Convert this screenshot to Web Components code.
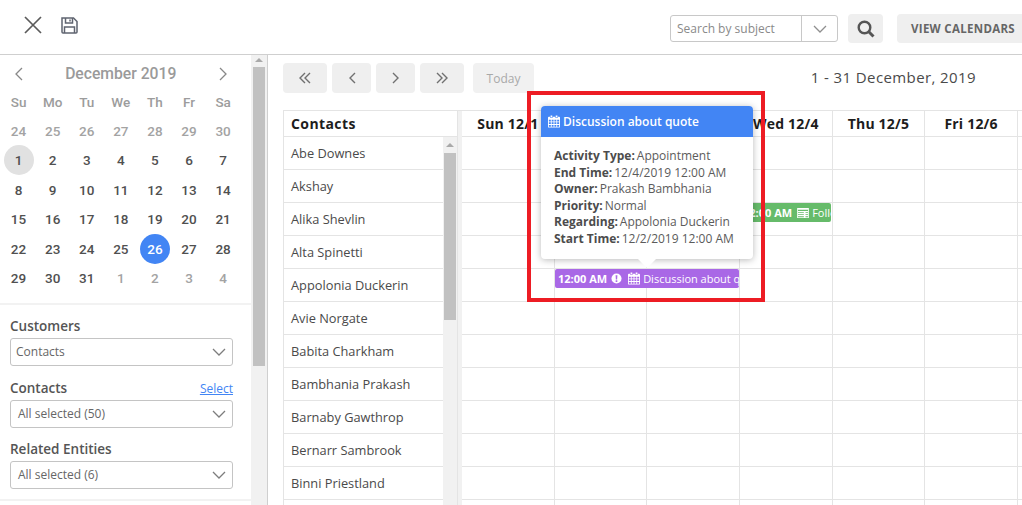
<!DOCTYPE html>
<html lang="en">
<head>
<meta charset="utf-8">
<title>Calendar</title>
<style>
  html, body { margin: 0; height: 100%; overflow: hidden; background: #fff; }
  body { font-family: "Open Sans", "Liberation Sans", sans-serif; color: #444; }
</style>
</head>
<body>
<calendar-app></calendar-app>
<script>
const icons = {
  calendar: `<svg viewBox="0 0 14 14" width="12" height="13" fill="currentColor"><path d="M3 0h2v2H3zM9 0h2v2H9z"/><path fill-rule="evenodd" d="M1 1.5h1.5v1.2h3V1.5h3v1.2h3V1.5H13a1 1 0 0 1 1 1V13a1 1 0 0 1-1 1H1a1 1 0 0 1-1-1V2.500a1 1 0 0 1 1-1zM1 5v2h2.300V5zm3.300 0v2h2.200V5zm3.200 0v2h2.200V5zm3.200 0v2H13V5zM1 8v2h2.300V8zm3.300 0v2h2.200V8zm3.200 0v2h2.200V8zm3.200 0v2H13V8zM1 11v2h2.300v-2zm3.300 0v2h2.200v-2zm3.200 0v2h2.200v-2zm3.200 0v2H13v-2z"/></svg>`,
  alert: `<svg viewBox="0 0 12 12" width="11" height="11"><circle cx="6" cy="6" r="5.500" fill="currentColor"/><path d="M5 2.500h2L6.700 7H5.300zM5.100 8h1.800v1.700H5.100z" fill="#a968e6"/></svg>`,
  note: `<svg viewBox="0 0 14 12" width="12" height="10" fill="currentColor"><path fill-rule="evenodd" d="M0 0h14v12H0zm1 2v1.500h12V2zm0 3v1h7V5zm9 0v1h3V5zM1 7.500v1h7v-1zm9 0v1h3v-1zM1 10v1h7v-1zm9 0v1h3v-1z"/></svg>`,
  chevron: `<svg viewBox="0 0 14 8" width="14" height="8" fill="none" stroke="currentColor" stroke-width="1.300"><path d="M1 1l6 6 6-6"/></svg>`
};

class ScrollBar extends HTMLElement {
  constructor() {
    super();
    const shadow = this.attachShadow({ mode: 'open' });
    shadow.innerHTML = `
      <style>
        :host {
          display: flex;
          flex-direction: column;
          align-items: center;
          flex: none;
          width: var(--bar-width, 16px);
          background: #f1f1f1;
          overflow: hidden;
        }
        .arrow {
          flex: none;
          width: 0;
          height: 0;
          margin-top: var(--arrow-top, 3px);
          border-left: 4px solid transparent;
          border-right: 4px solid transparent;
          border-bottom: 4px solid #a9a9a9;
        }
        .thumb {
          flex: none;
          width: 12px;
          margin-top: var(--thumb-gap, 5px);
          height: var(--thumb-height, 100px);
          background: #c1c1c1;
        }
      </style>
      <div class="arrow"></div>
      <div class="thumb"></div>
    `;
  }
}
customElements.define('scroll-bar', ScrollBar);

class AppHeader extends HTMLElement {
  constructor() {
    super();
    const shadow = this.attachShadow({ mode: 'open' });
    shadow.innerHTML = `
      <style>
        :host {
          display: flex;
          align-items: center;
          flex: none;
          height: 51px;
          border-bottom: 1px solid #cfcfcf;
          padding: 3px 0 0 24px;
          box-sizing: content-box;
          overflow: hidden;
        }
        .left { display: flex; gap: 19px; align-items: center; flex: 1; margin-top: -7px; color: #5b5b5b; }
        .left svg { display: block; }
        .search {
          display: flex;
          width: 168px;
          height: 27px;
          box-sizing: border-box;
          border: 1px solid #c8c8c8;
          border-radius: 3px;
          font-size: 12px;
          color: #8a8a8a;
        }
        .search span { flex: 1; padding-left: 6px; line-height: 26px; }
        .search i {
          display: flex;
          align-items: center;
          justify-content: center;
          width: 35px;
          border-left: 1px solid #c8c8c8;
          color: #8f8f8f;
        }
        button {
          height: 29px;
          border: 0;
          border-radius: 4px;
          background: #efefef;
          color: #666;
          font: 700 11.500px "Open Sans", sans-serif;
          padding: 0;
        }
        .find { width: 35px; margin-left: 10px; display: flex; align-items: center; justify-content: center; }
        .view { width: 140px; flex: none; margin-left: 14px; margin-right: -15px; padding-left: 14px; text-align: left; letter-spacing: .3px; }
      </style>
      <div class="left">
        <svg width="18" height="18" viewBox="0 0 18 18" fill="none" stroke="#5b5b5b" stroke-width="1.700"><path d="M1 1l16 16M17 1L1 17"/></svg>
        <svg width="17" height="17" viewBox="0 0 17 17" fill="none" stroke="#5f6470" stroke-width="1.500"><path d="M1 1h11.500L16 4.500V15a1 1 0 0 1-1 1H2a1 1 0 0 1-1-1z"/><path d="M4.500 1v5h7V1M9 2.500V4.500" /><path d="M3.500 16v-6h10v6"/></svg>
      </div>
      <div class="search"><span>Search by subject</span><i>${icons.chevron}</i></div>
      <button class="find" aria-label="Search">
        <svg width="18" height="18" viewBox="0 0 18 18" fill="none" stroke="#555" stroke-width="2.400"><circle cx="7.500" cy="7.500" r="5.800"/><path d="M11.800 11.800L16.500 16.500" stroke-width="3"/></svg>
      </button>
      <button class="view">VIEW CALENDARS</button>
    `;
  }
}
customElements.define('app-header', AppHeader);

class MiniCalendar extends HTMLElement {
  constructor() {
    super();
    const shadow = this.attachShadow({ mode: 'open' });
    const heads = ['Su', 'Mo', 'Tu', 'We', 'Th', 'Fr', 'Sa'];
    const days = [24, 25, 26, 27, 28, 29, 30];
    for (let d = 1; d <= 31; d++) days.push(d);
    days.push(1, 2, 3, 4);
    const cells = days.map((d, i) => {
      const muted = i < 7 || i >= 38;
      let cls = muted ? 'muted' : '';
      if (i === 7) cls = 'first';
      if (d === 26 && i > 7) cls = 'today';
      return `<span class="${cls}"><b>${d}</b></span>`;
    }).join('');
    shadow.innerHTML = `
      <style>
        :host {
          display: block;
          font-family: Roboto, "Liberation Sans", sans-serif;
          padding: 5px 0 10px 1.500px;
          border-bottom: 2px solid #f2f2f2;
        }
        .month {
          display: flex;
          align-items: center;
          justify-content: space-between;
          height: 27px;
          padding: 0 23px 0 12px;
          font-size: 15.700px;
          font-weight: 500;
          color: #9a9a9a;
        }
        .month svg { display: block; }
        .grid {
          display: grid;
          grid-template-columns: repeat(7, 34.100px);
          grid-auto-rows: 29.400px;
          font-size: 13.500px;
          text-align: center;
          color: #505050;
        }
        .grid > * { display: flex; align-items: center; justify-content: center; }
        .head { color: #9c9c9c; font-weight: 500; }
        b {
          display: flex;
          align-items: center;
          justify-content: center;
          width: 30px;
          height: 30px;
          border-radius: 50%;
          font-weight: 500;
          flex: none;
        }
        .muted { color: #a3a3a3; }
        .first b { background: #e1e1e1; }
        .today b { background: #4285f4; color: #fff; }
      </style>
      <div class="month">
        <svg width="9" height="14" viewBox="0 0 9 14" fill="none" stroke="#888" stroke-width="1.300"><path d="M8 1L2 7l6 6"/></svg>
        <span>December 2019</span>
        <svg width="9" height="14" viewBox="0 0 9 14" fill="none" stroke="#888" stroke-width="1.300"><path d="M1 1l6 6-6 6"/></svg>
      </div>
      <div class="grid">
        ${heads.map(h => `<span class="head">${h}</span>`).join('')}
        ${cells}
      </div>
    `;
  }
}
customElements.define('mini-calendar', MiniCalendar);

class FilterSelect extends HTMLElement {
  constructor() {
    super();
    const shadow = this.attachShadow({ mode: 'open' });
    const link = this.getAttribute('link');
    shadow.innerHTML = `
      <style>
        :host { display: block; }
        .label {
          display: flex;
          justify-content: space-between;
          align-items: flex-end;
          height: 20px;
          font-size: 13.500px;
          font-weight: 600;
          color: #555;
          line-height: 19px;
        }
        a { font-size: 12px; font-weight: 400; color: #4285f4; text-decoration: underline; }
        .box {
          display: flex;
          align-items: center;
          justify-content: space-between;
          height: 28px;
          margin-top: 2px;
          box-sizing: border-box;
          border: 1px solid #c4c4c4;
          border-radius: 3px;
          padding: 0 6px 0 var(--select-pad, 7px);
          font-size: 12px;
          color: #666;
        }
        .box i { color: #7d7d7d; display: flex; }
      </style>
      <div class="label"><span>${this.getAttribute('label')}</span>${link ? `<a>${link}</a>` : ''}</div>
      <div class="box"><span>${this.getAttribute('value')}</span><i>${icons.chevron}</i></div>
    `;
  }
}
customElements.define('filter-select', FilterSelect);

class SidePanel extends HTMLElement {
  constructor() {
    super();
    const shadow = this.attachShadow({ mode: 'open' });
    shadow.innerHTML = `
      <style>
        :host {
          display: flex;
          flex: none;
          width: 268px;
          box-sizing: border-box;
          border-right: 1px solid #cfcfcf;
          overflow: hidden;
        }
        .body { flex: 1; min-width: 0; }
        .filters {
          display: flex;
          flex-direction: column;
          gap: 11px;
          padding: 11px 18px 10px 10px;
          border-bottom: 2px solid #f2f2f2;
        }
        scroll-bar { --thumb-height: 299px; }
      </style>
      <div class="body">
        <mini-calendar></mini-calendar>
        <div class="filters">
          <filter-select label="Customers" value="Contacts" style="--select-pad:5px"></filter-select>
          <filter-select label="Contacts" value="All selected (50)" link="Select" style="margin-top:1px"></filter-select>
          <filter-select label="Related Entities" value="All selected (6)"></filter-select>
        </div>
      </div>
      <scroll-bar></scroll-bar>
    `;
  }
}
customElements.define('side-panel', SidePanel);

class CalToolbar extends HTMLElement {
  constructor() {
    super();
    const shadow = this.attachShadow({ mode: 'open' });
    const stroke = 'fill="none" stroke="#707070" stroke-width="1.400"';
    shadow.innerHTML = `
      <style>
        :host {
          display: flex;
          align-items: center;
          flex: none;
          height: 30px;
          padding: 8px 46px 0 15px;
          color: #444;
        }
        button {
          display: flex;
          align-items: center;
          justify-content: center;
          height: 30px;
          border: 0;
          border-radius: 4px;
          background: #efefef;
          padding: 0;
          margin-right: 5px;
        }
        .wide { width: 44px; }
        .narrow { width: 39px; }
        .today {
          width: 61px;
          margin-left: 4px;
          color: #a9a9a9;
          background: #f1f1f1;
          font: 12px "Open Sans", sans-serif;
        }
        .range {
          margin-left: auto;
          margin-bottom: 2px;
          font-size: 15px;
          letter-spacing: .4px;
          color: #4a4a4a;
        }
      </style>
      <button class="wide" aria-label="Previous year"><svg width="12" height="12" viewBox="0 0 12 12" ${stroke}><path d="M6 1L1 6l5 5M11 1L6 6l5 5"/></svg></button>
      <button class="narrow" aria-label="Previous"><svg width="8" height="12" viewBox="0 0 8 12" ${stroke}><path d="M7 1L2 6l5 5"/></svg></button>
      <button class="narrow" aria-label="Next"><svg width="8" height="12" viewBox="0 0 8 12" ${stroke}><path d="M1 1l5 5-5 5"/></svg></button>
      <button class="wide" aria-label="Next year"><svg width="12" height="12" viewBox="0 0 12 12" ${stroke}><path d="M1 1l5 5-5 5M6 1l5 5-5 5"/></svg></button>
      <button class="today">Today</button>
      <div class="range">1 - 31 December, 2019</div>
    `;
  }
}
customElements.define('cal-toolbar', CalToolbar);

class EventChip extends HTMLElement {
  constructor() {
    super();
    const shadow = this.attachShadow({ mode: 'open' });
    shadow.innerHTML = `
      <style>
        :host {
          position: absolute;
          z-index: 1;
          top: 0;
          left: var(--chip-left, 0);
          width: var(--chip-width, 92px);
          height: 19px;
          box-sizing: border-box;
          display: flex;
          align-items: center;
          gap: 5px;
          padding-left: 3px;
          border-radius: 2px;
          background: var(--chip-color, #a968e6);
          color: #fff;
          font-size: 11px;
          white-space: nowrap;
          overflow: hidden;
        }
        b { font-weight: 700; }
        svg { display: block; flex: none; }
        .gap { display: flex; align-items: center; gap: 3px; }
        .alert { display: flex; margin-left: -1px; margin-right: 1px; }
      </style>
      <b>${this.getAttribute('time')}</b>
      ${this.hasAttribute('alert') ? `<span class="alert">${icons.alert}</span>` : ''}
      <span class="gap">${icons[this.getAttribute('icon')]}<span>${this.getAttribute('title')}</span></span>
    `;
  }
}
customElements.define('event-chip', EventChip);

class EventTooltip extends HTMLElement {
  constructor() {
    super();
    const shadow = this.attachShadow({ mode: 'open' });
    shadow.innerHTML = `
      <style>
        :host {
          position: absolute;
          z-index: 3;
          left: 273px;
          top: 51px;
          width: 212px;
          border-radius: 4px;
          background: #fff;
          box-shadow: 0 1px 7px rgba(0, 0, 0, .28);
          font-size: 12px;
          color: #5b5b5b;
        }
        .title {
          display: flex;
          align-items: center;
          gap: 3px;
          height: 31px;
          padding-left: 7px;
          border-radius: 4px 4px 0 0;
          background: #4285f4;
          color: #fff;
          font-weight: 600;
          font-size: 12px;
        }
        .rows { padding: 11px 8px 12px 13px; line-height: 16.500px; }
        .arrow {
          position: absolute;
          left: 96px;
          bottom: -9px;
          width: 0;
          height: 0;
          border-left: 10px solid transparent;
          border-right: 10px solid transparent;
          border-top: 10px solid #fff;
        }
      </style>
      <div class="title">${icons.calendar}<span>Discussion about quote</span></div>
      <div class="rows"><slot></slot></div>
      <div class="arrow"></div>
    `;
  }
}
customElements.define('event-tooltip', EventTooltip);

class TipRow extends HTMLElement {
  constructor() {
    super();
    const shadow = this.attachShadow({ mode: 'open' });
    shadow.innerHTML = `
      <style>
        :host { display: block; white-space: nowrap; }
        b { font-weight: 700; color: #4c4c4c; margin-right: 2px; }
      </style>
      <b>${this.getAttribute('name')}:</b><slot></slot>
    `;
  }
}
customElements.define('tip-row', TipRow);

class ScheduleGrid extends HTMLElement {
  constructor() {
    super();
    const shadow = this.attachShadow({ mode: 'open' });
    const contacts = ['Abe Downes', 'Akshay', 'Alika Shevlin', 'Alta Spinetti', 'Appolonia Duckerin', 'Avie Norgate', 'Babita Charkham', 'Bambhania Prakash', 'Barnaby Gawthrop', 'Bernarr Sambrook', 'Binni Priestland', ''];
    const days = ['Sun 12/1', 'Mon 12/2', 'Tue 12/3', 'Wed 12/4', 'Thu 12/5', 'Fri 12/6', ''];
    const chips = {
      2: `<event-chip time="12:00 AM" icon="note" title="Follow up" style="--chip-left:278px;--chip-width:91px;--chip-color:#66bb6a"></event-chip>`,
      4: `<event-chip time="12:00 AM" icon="calendar" title="Discussion about quote" alert style="--chip-left:93px;--chip-width:184px"></event-chip>`
    };
    const blank = days.map(() => '<span></span>').join('');
    shadow.innerHTML = `
      <style>
        :host {
          display: flex;
          flex: 1;
          min-height: 0;
          margin: 17px 0 0 15px;
          border-top: 1px solid #e4e4e4;
          position: relative;
        }
        .names {
          display: grid;
          grid-template-columns: 1fr 14px;
          grid-template-rows: 26px 1fr;
          flex: none;
          width: 174px;
          box-sizing: border-box;
          border-left: 1px solid #e4e4e4;
          overflow: hidden;
        }
        .names h3 {
          grid-column: 1 / 3;
          margin: 0;
          padding-left: 7px;
          font-size: 14px;
          font-weight: 700;
          line-height: 25px;
          color: #1d1d1d;
          border-bottom: 1px solid #e4e4e4;
          letter-spacing: .4px;
        }
        .list div {
          height: 33px;
          box-sizing: border-box;
          padding-left: 7px;
          border-bottom: 1px solid #e4e4e4;
          font-size: 12.800px;
          line-height: 33px;
          color: #4a4a4a;
        }
        scroll-bar { --bar-width: 14px; --arrow-top: 6px; --thumb-gap: 6px; --thumb-height: 167px; }
        .split {
          flex: none;
          width: 5px;
          background: #f1f1f1;
          border-left: 1px solid #e4e4e4;
          box-sizing: border-box;
        }
        .days { flex: 1; min-width: 0; overflow: hidden; position: relative; }
        .row {
          display: grid;
          grid-template-columns: repeat(7, 92.670px);
          position: relative;
          height: 33px;
          box-sizing: border-box;
          border-bottom: 1px solid #e4e4e4;
        }
        .row span { border-right: 1px solid #e4e4e4; }
        .row.head { height: 26px; }
        .row.head span {
          text-align: center;
          font-size: 14px;
          font-weight: 700;
          line-height: 25px;
          letter-spacing: .2px;
          color: #1d1d1d;
        }
      </style>
      <div class="names">
        <h3>Contacts</h3>
        <div class="list">${contacts.map(c => `<div>${c}</div>`).join('')}</div>
        <scroll-bar></scroll-bar>
      </div>
      <div class="split"></div>
      <div class="days">
        <div class="row head">${days.map(d => `<span>${d}</span>`).join('')}</div>
        ${contacts.map((c, i) => `<div class="row">${blank}${chips[i] || ''}</div>`).join('')}
      </div>
    `;
  }
}
customElements.define('schedule-grid', ScheduleGrid);

class CalendarApp extends HTMLElement {
  constructor() {
    super();
    const shadow = this.attachShadow({ mode: 'open' });
    shadow.innerHTML = `
      <style>
        :host {
          display: flex;
          flex-direction: column;
          height: 505px;
          overflow: hidden;
        }
        .page { display: flex; flex: 1; min-height: 0; }
        main { display: flex; flex-direction: column; flex: 1; min-width: 0; overflow: hidden; position: relative; }
        .mark {
          position: absolute;
          z-index: 4;
          left: 259px;
          top: 36px;
          width: 238px;
          height: 211px;
          box-sizing: border-box;
          border: 4px solid #ed1c24;
        }
      </style>
      <app-header></app-header>
      <div class="page">
        <side-panel></side-panel>
        <main>
          <cal-toolbar></cal-toolbar>
          <schedule-grid></schedule-grid>
          <event-tooltip>
            <tip-row name="Activity Type">Appointment</tip-row>
            <tip-row name="End Time">12/4/2019 12:00 AM</tip-row>
            <tip-row name="Owner">Prakash Bambhania</tip-row>
            <tip-row name="Priority">Normal</tip-row>
            <tip-row name="Regarding">Appolonia Duckerin</tip-row>
            <tip-row name="Start Time">12/2/2019 12:00 AM</tip-row>
          </event-tooltip>
          <div class="mark"></div>
        </main>
      </div>
    `;
  }
}
customElements.define('calendar-app', CalendarApp);
</script>
</body>
</html>
